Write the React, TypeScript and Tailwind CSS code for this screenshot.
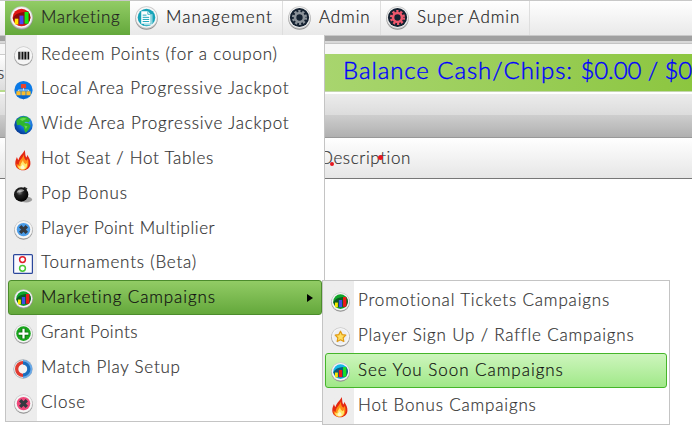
import type { ReactNode } from 'react';

interface MenuEntry {
    label: string;
    icon: ReactNode;
    tracking: string;
    state?: 'open' | 'hover';
}

// Round silver badge used by most of the icons
function Badge({ size = 19, fill, children }: { size?: number; fill: string; children?: ReactNode }) {
    return (
        <svg width={size} height={size + 1} viewBox="0 0 24 25" className="block shrink-0">
            <circle cx="12" cy="13" r="11.7" fill="#8f8f8f" />
            <circle cx="12" cy="12" r="11.7" fill="#c9c9c9" />
            <circle cx="12" cy="11.9" r="10.9" fill="#f7f7f7" />
            <circle cx="12" cy="12" r="9.2" fill={fill} />
            {children}
        </svg>
    );
}

function BarsIcon({ size, fill, shade, colors }: { size?: number; fill: string; shade: string; colors: string[] }) {
    return (
        <Badge size={size} fill={fill}>
            <path d="M3 13 C5 8 10 6.5 19 5.8 A9.2 9.2 0 0 1 18 19 L6 19 Z" fill={shade} />
            <path d="M5 13.2h3.7v6H5z" fill={colors[0]} />
            <path d="M9.9 10h4.2v9H9.900z" fill={colors[1]} />
            <path d="M15.200 6.200h4.200v12.300h-4.200z" fill={colors[2]} />
        </Badge>
    );
}

function GearIcon({ color }: { color: string }) {
    return (
        <Badge size={23} fill="#152231">
            <circle cx="12" cy="12" r="10" fill="#152231" />
            <circle cx="12" cy="12" r="6.6" fill="none" stroke={color} strokeWidth="2.6" strokeDasharray="2.3 1.85" />
            <circle cx="12" cy="12" r="4.6" fill="none" stroke={color} strokeWidth="2.6" />
        </Badge>
    );
}

function DocumentIcon() {
    return (
        <Badge size={23} fill="#17a3b8">
            <path d="M6.5 5.5h7l2.8 3v10h-9.8z" fill="#fff" />
            <path d="M13.4 5.5v3.2h2.9" fill="none" stroke="#17a3b8" strokeWidth=".8" />
            <path d="M8 9.5h4M8 11.8h6.8M8 14h6.8M8 16.2h6.8" stroke="#17a3b8" />
            <path d="M17.6 8.5v11H9.5" fill="none" stroke="#d8f4f7" />
        </Badge>
    );
}

function BarcodeIcon() {
    return (
        <Badge fill="#f4f4f4">
            <path d="M6.4 7v10M10.600 7v10M14.200 7v10M18.200 7v10" stroke="#111" strokeWidth="2" />
            <path d="M8.600 7v10M12.500 7v10M16.200 7v10" stroke="#222" strokeWidth=".8" />
        </Badge>
    );
}

function NetworkIcon() {
    return (
        <svg width="19" height="20" viewBox="0 0 24 25" className="block">
            <circle cx="12" cy="12.5" r="11.5" fill="#0b7ae6" />
            <path d="M3 19h18l-9 5.5z" fill="#0865cc" />
            <path d="M12 10v3M5.5 14v-1.5h13V14" fill="none" stroke="#fff" strokeWidth=".9" />
            <rect x="8.7" y="5" width="6.6" height="5.4" rx=".8" fill="#e8442e" />
            <path d="M3 14h5.4v5H3zM9.4 14h5.2v5H9.4zM15.6 14H21v5h-5.4z" fill="#fbbc2c" />
        </svg>
    );
}

function GlobeIcon() {
    return (
        <svg width="19" height="20" viewBox="0 0 24 25" className="block">
            <defs>
                <radialGradient id="ocean" cx="65%" cy="35%" r="70%">
                    <stop offset="0%" stopColor="#4aa8f5" />
                    <stop offset="60%" stopColor="#0c66cf" />
                    <stop offset="100%" stopColor="#063a93" />
                </radialGradient>
            </defs>
            <circle cx="12" cy="12.5" r="11.6" fill="url(#ocean)" />
            <path d="M2.8 7C6 2 12 .6 17 2.3l3.600 3.600-1.900 3-4.100-.6-1.8 1.600 5.200.5 3 3.200-2.200 4.400-4 4.500-2-3.600-.4-3.600-4.800-3.100-3.800.7z" fill="#2fb62f" />
            <path d="M7 5l5-1.8 4 1.300-5.500 2.8zM13 13l4 1-2 4z" fill="#69da50" />
        </svg>
    );
}

function FlameIcon() {
    return (
        <svg width="18" height="22" viewBox="0 0 18 22" className="block">
            <path d="M10.7 1C11.5 4.5 11 6.5 12.3 8.5 13 8 13.1 6.8 13 5.7c2.4 3 3.7 6 3.4 9.3-.4 4-3.6 6.3-7.5 6.3S1.5 18.8 1.3 15c-.2-3 1-4.9 1.6-6.9.6 1.2.7 2.3 1.6 3C5.2 7 8.8 5.3 10.7 1z" fill="#e42712" />
            <path d="M9.8 5.5c.1 3 .8 4.7 2.5 6.3.8-.5 1.2-1.3 1.5-2.2 2 6.9-.3 11.200-5 11.200-4 0-6.500-2.500-6.300-6.300.7 1 1.300 1.200 2.200 1.200C4.900 11 8.500 9.800 9.800 5.500z" fill="#ff8b16" />
            <path d="M9 11c.3 2.400 1.300 3.200 2.800 4.300.5-.5.8-1 1-1.500.9 4-.8 6.900-4 6.900-2.900 0-4.800-1.700-4.700-4.300.8.8 1.500.9 2.300.7C6.300 14.700 8 13.500 9 11z" fill="#ffe76a" />
            <path d="M8.700 15.200c.7 1.800 2.300 2 1.900 4-.3 1-3.500 1.200-4-.2-.4-1.400 1.500-1.800 2.100-3.800z" fill="#fff8cf" />
        </svg>
    );
}

function BombIcon() {
    return (
        <svg width="20" height="19" viewBox="0 0 22 20" className="block">
            <defs>
                <radialGradient id="bomb" cx="40%" cy="35%" r="65%">
                    <stop offset="0%" stopColor="#888" />
                    <stop offset="35%" stopColor="#222" />
                    <stop offset="100%" stopColor="#000" />
                </radialGradient>
            </defs>
            <ellipse cx="14.5" cy="15.5" rx="6.5" ry="3.3" fill="#9c9c9c" />
            <path d="M11 3.500l1.500-2 3.500 1.800L14.500 5z" fill="#333" />
            <circle cx="9" cy="10" r="7.900" fill="url(#bomb)" />
            <path d="M4 8C5 4.500 9.500 3 12.500 5.500 11 7.500 7 7 4 8z" fill="#fff" opacity=".55" />
        </svg>
    );
}

function CrossIcon({ fill }: { fill: string }) {
    return (
        <Badge fill="#eee">
            <circle cx="12" cy="12" r="8.5" fill={fill} />
            <path d="M7.8 7.8l8.4 8.4M16.2 7.8l-8.4 8.400" stroke="#353a40" strokeWidth="4.2" />
        </Badge>
    );
}

function TrafficIcon() {
    return (
        <svg width="20" height="20" viewBox="0 0 20 20" className="block">
            <rect x=".6" y=".6" width="18.8" height="18.8" rx="1" fill="#fafaff" stroke="#2b479b" strokeWidth="1.2" />
            <circle cx="9.5" cy="5.6" r="2.900" fill="#fff" stroke="#e01c28" strokeWidth="1.5" />
            <circle cx="9.5" cy="14.3" r="2.900" fill="#fff" stroke="#48c832" strokeWidth="1.5" />
        </svg>
    );
}

function PlusIcon() {
    return (
        <Badge fill="#18a51c">
            <path d="M12 5.5v13M5.5 12h13" stroke="#096c0c" strokeWidth="5" />
            <path d="M12 5.800v12.400M5.800 12h12.400" stroke="#fff" strokeWidth="2.8" />
        </Badge>
    );
}

function RingIcon() {
    return (
        <svg width="20" height="20" viewBox="0 0 24 24" className="block">
            <circle cx="12" cy="12" r="11.6" fill="#a8adb2" />
            <circle cx="12" cy="12" r="10.6" fill="#f1f3f5" />
            <path d="M12 .8a11.200 11.200 0 0 1 0 22.400z" fill="#69a9e8" />
            <path d="M12 4.4a7.600 7.600 0 0 0 0 15.200" fill="none" stroke="#e03b30" strokeWidth="4" />
            <path d="M12 5a7 7 0 0 1 0 14" fill="none" stroke="#1b6dbd" strokeWidth="4" />
            <circle cx="12" cy="12" r="5" fill="#f4f4f4" />
        </svg>
    );
}

function StarIcon() {
    return (
        <Badge fill="#eceef2">
            <path d="M12 5.200l2.100 4.300 4.600.7-3.300 3.300.8 4.700-4.200-2.200-4.200 2.200.8-4.700-3.300-3.300 4.600-.7z" fill="#ffdf62" stroke="#e09a12" strokeWidth="1.5" strokeLinejoin="round" />
        </Badge>
    );
}

const topItems = [
    { label: 'Marketing', width: 'w-[125px]', tracking: 'tracking-[0.65px]', active: true, icon: <BarsIcon size={23} fill="#df1616" shade="#8e0b0b" colors={['#ffe500', '#4848f5', '#16e816']} /> },
    { label: 'Management', width: 'w-[153px]', tracking: 'tracking-[1.1px]', icon: <DocumentIcon /> },
    { label: 'Admin', width: 'w-[98px]', tracking: 'tracking-[0.88px]', icon: <GearIcon color="#8b9299" /> },
    { label: 'Super Admin', width: 'w-[149px]', tracking: 'tracking-[0.9px]', icon: <GearIcon color="#f0586c" /> },
];

const marketingMenu: MenuEntry[] = [
    { label: 'Redeem Points (for a coupon)', tracking: 'tracking-[0.79px]', icon: <BarcodeIcon /> },
    { label: 'Local Area Progressive Jackpot', tracking: 'tracking-[0.87px]', icon: <NetworkIcon /> },
    { label: 'Wide Area Progressive Jackpot', tracking: 'tracking-[0.83px]', icon: <GlobeIcon /> },
    { label: 'Hot Seat / Hot Tables', tracking: 'tracking-[0.72px]', icon: <FlameIcon /> },
    { label: 'Pop Bonus', tracking: 'tracking-[0.9px]', icon: <BombIcon /> },
    { label: 'Player Point Multiplier', tracking: 'tracking-[0.57px]', icon: <CrossIcon fill="#4a9ce8" /> },
    { label: 'Tournaments (Beta)', tracking: 'tracking-[0.8px]', icon: <TrafficIcon /> },
    { label: 'Marketing Campaigns', tracking: 'tracking-[0.88px]', state: 'open', icon: <BarsIcon fill="#12a52b" shade="#0a5b20" colors={['#f5e800', '#3d4fe8', '#f01818']} /> },
    { label: 'Grant Points', tracking: 'tracking-[0.5px]', icon: <PlusIcon /> },
    { label: 'Match Play Setup', tracking: 'tracking-[0.75px]', icon: <RingIcon /> },
    { label: 'Close', tracking: 'tracking-[0.85px]', icon: <CrossIcon fill="#f0477a" /> },
];

const campaignsMenu: MenuEntry[] = [
    { label: 'Promotional Tickets Campaigns', tracking: 'tracking-[0.83px]', icon: <BarsIcon fill="#12a52b" shade="#0a5b20" colors={['#f5e800', '#3d4fe8', '#f01818']} /> },
    { label: 'Player Sign Up / Raffle Campaigns', tracking: 'tracking-[0.81px]', icon: <StarIcon /> },
    { label: 'See You Soon Campaigns', tracking: 'tracking-[0.97px]', state: 'hover', icon: <BarsIcon fill="#16b8e6" shade="#0b5a78" colors={['#f5e800', '#f01818', '#18e028']} /> },
    { label: 'Hot Bonus Campaigns', tracking: 'tracking-[0.82px]', icon: <FlameIcon /> },
];

const rowState = {
    open: 'border-[#4c8c2c] bg-linear-to-b from-[#92cc65] to-[#64a83b] text-[#111]',
    hover: 'border-[#45b52a] bg-linear-to-b from-[#cdf5bd] to-[#a0e888] text-[#111]',
    idle: 'border-transparent text-[#333]',
};

function MenuRow({ entry, height }: { entry: MenuEntry; height: string }) {
    return (
        <div className={`flex items-center rounded-[3px] border ${height} ${rowState[entry.state ?? 'idle']}`}>
            <span className="mt-[3px] flex w-7 shrink-0 justify-center">{entry.icon}</span>
            <span className={`-mt-px ml-1 flex-1 whitespace-nowrap ${entry.tracking}`}>{entry.label}</span>
            {entry.state === 'open' && (
                <svg width="6" height="8" viewBox="0 0 6 8" className="mr-2">
                    <path d="M0 0L6 4 0 8z" fill="#000" />
                </svg>
            )}
        </div>
    );
}

export default function App() {
    return (
        <div className="relative h-[437px] w-[692px] overflow-hidden bg-white font-['Lato',sans-serif] text-[17px] leading-5 font-light text-[#333] [-webkit-text-stroke:0.2px]">
            {/* Menu bar */}
            <div className="flex h-9 border-y border-t-[#c8c8c8] border-b-[#c8c8c8] bg-linear-to-b from-white to-[#e9e9e9] pl-[5px] text-[#222]">
                {topItems.map((item) => (
                    <div
                        key={item.label}
                        className={`flex items-center ${item.width} ${item.active ? 'bg-linear-to-b from-[#92cc65] to-[#64a83b]' : 'border-r border-[#dedede]'}`}
                    >
                        <span className="ml-1 flex w-[25px] shrink-0 justify-center">{item.icon}</span>
                        <span className={`-mt-0.5 ml-[7px] whitespace-nowrap ${item.tracking}`}>{item.label}</span>
                    </div>
                ))}
            </div>
            <div className="h-[5px] bg-[#a0a0a0]" />
            <div className="h-[3px] border-b border-[#c4c4c4] bg-[#d8d8d8]" />
            <div className="h-[10px] bg-[#f7f7f7]" />

            {/* Balance */}
            <div className="flex h-[40px]">
                <div className="flex h-[38px] w-[5px] items-center overflow-hidden border-t border-b-2 border-t-[#ccc] border-b-[#b8dc8c] bg-linear-to-b from-white to-[#dcdcdc]">
                    <span className="-ml-[3px]">s</span>
                </div>
                <div className="ml-80 flex h-[38px] flex-1 items-center overflow-hidden border-b border-[#c3d6ad] bg-linear-to-r from-[#a8d56e] to-[#8cc63f] pl-[18px]">
                    <p className="-mt-1.5 text-[24px] leading-8 whitespace-nowrap text-[#0000ff] [-webkit-text-stroke:0.4px]">
                        <span className="tracking-[0.93px]">Balance Cash/Chips: </span>
                        <span className="tracking-[-0.1px]">$0.00 / $0.00</span>
                    </p>
                </div>
            </div>

            {/* Grid header */}
            <div className="h-[21px] bg-linear-to-b from-[#ececec] to-[#dcdcdc]" />
            <div className="h-[23px] border-b border-[#999] bg-linear-to-b from-[#cecece] to-[#b0b0b0]" />
            <div className="flex h-[41px] items-center border-b border-[#777] bg-linear-to-b from-white to-[#e6e6e6] pl-[320px]">
                <span className="tracking-[0.6px]">Description</span>
            </div>
            <div className="absolute top-[162px] left-[330px] size-1 rounded-full bg-[#e8171f]" />
            <div className="absolute top-[155px] left-[378px] size-[5px] rounded-full bg-[#e8171f]" />

            {/* Marketing dropdown */}
            <div className="absolute top-[35px] left-[5px] h-[387px] w-[320px] border border-t-0 border-[#c4c4c4] bg-linear-to-r from-[#ededed] from-[31px] to-white to-[31px] px-0.5 pt-[1.8px]">
                {marketingMenu.map((entry) => (
                    <MenuRow key={entry.label} entry={entry} height="h-[34.8px]" />
                ))}
            </div>

            {/* Campaigns submenu */}
            <div className="absolute top-[280px] left-[322px] h-[145px] w-[348px] border border-[#c4c4c4] bg-linear-to-r from-[#ededed] from-[31px] to-white to-[31px] px-0.5 pt-0.5">
                {campaignsMenu.map((entry) => (
                    <MenuRow key={entry.label} entry={entry} height="h-[35px]" />
                ))}
            </div>
        </div>
    );
}
